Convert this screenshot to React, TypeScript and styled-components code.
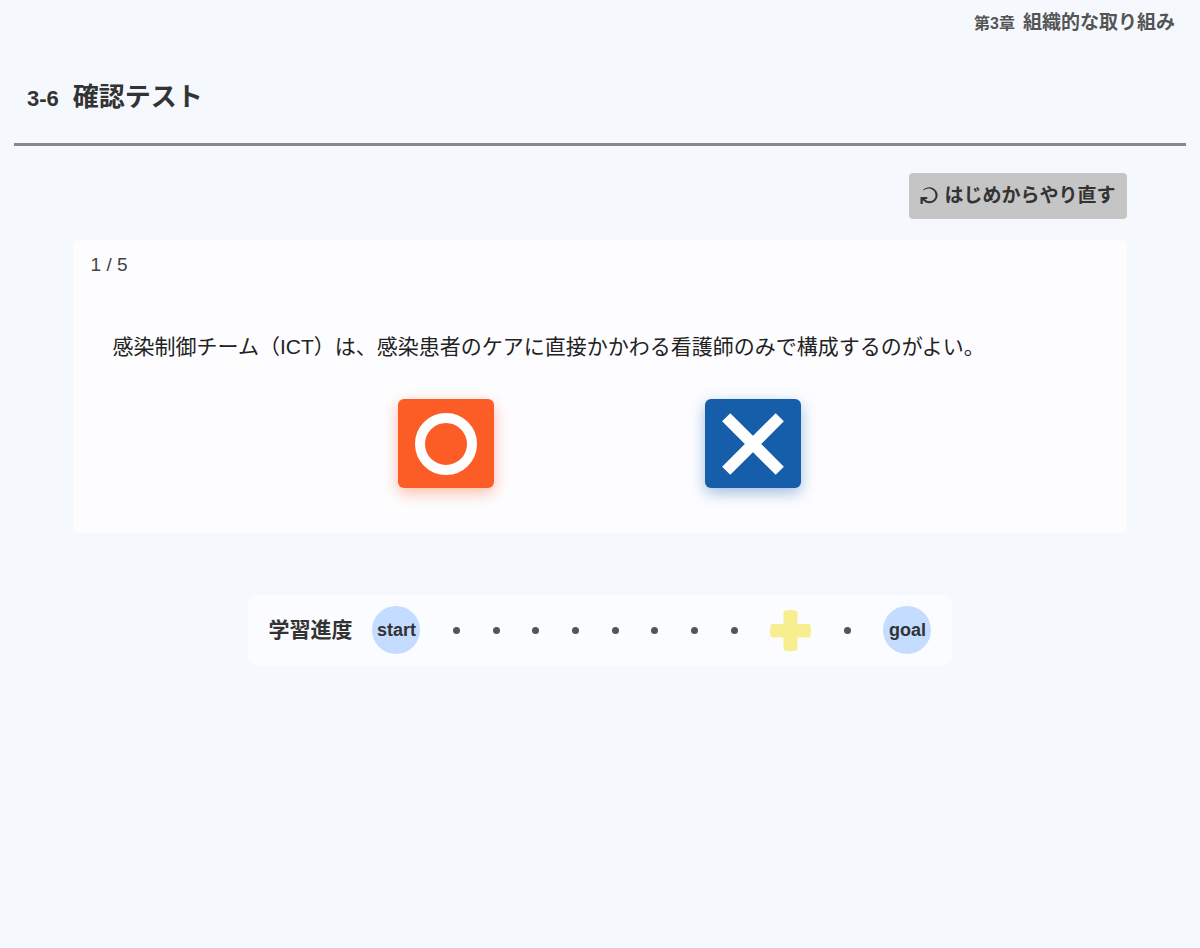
import React from "react";
import styled, { createGlobalStyle } from "styled-components";

const GlobalStyle = createGlobalStyle`
  *, *::before, *::after {
    box-sizing: border-box;
  }
  body {
    margin: 0;
    background: #f5f9fe;
    color: #333;
    font-family: "Liberation Sans", "Noto Sans CJK JP", sans-serif;
    font-size: 19px;
    line-height: 28px;
  }
`;

const Page = styled.div`
  padding: 9px 14px 40px;
`;

const Chapter = styled.p`
  margin: 0;
  padding-right: 11px;
  display: flex;
  justify-content: flex-end;
  align-items: baseline;
  gap: 8px;
  color: #555;
  font-weight: bold;
`;

const ChapterNumber = styled.span`
  font-size: 16px;
`;

const Heading = styled.h1`
  margin: 0;
  padding: 40px 13px 25px;
  display: flex;
  align-items: baseline;
  gap: 14px;
  border-bottom: 3px solid #888;
  font-size: 26px;
  line-height: 39px;
`;

const HeadingNumber = styled.span`
  font-size: 22px;
`;

const Quiz = styled.main`
  width: 90%;
  margin: 27px auto 0;
  display: flex;
  flex-direction: column;
`;

const RestartButton = styled.button`
  align-self: flex-end;
  display: flex;
  align-items: center;
  gap: 6px;
  padding: 9px 12px 9px 11px;
  border: 0;
  border-radius: 4px;
  background: #c5c5c5;
  color: #333;
  font: inherit;
  font-weight: bold;
  cursor: pointer;
`;

const Card = styled.section`
  margin-top: 21px;
  padding: 11px 18px 45px;
  border-radius: 6px;
  background: #fdfdff;
`;

const Counter = styled.p`
  margin: 0;
  color: #444;
`;

const Question = styled.p`
  margin: 52px 22px 36px;
  color: #222;
  font-size: 21px;
  line-height: 32px;
`;

const Answers = styled.div`
  display: flex;
  justify-content: center;
  gap: 211px;
`;

const AnswerButton = styled.button<{ $color: string; $shadow: string }>`
  width: 96px;
  height: 89px;
  padding: 0;
  display: grid;
  place-items: center;
  border: 0;
  border-radius: 6px;
  background: ${(p) => p.$color};
  box-shadow: 0 5px 15px ${(p) => p.$shadow};
  cursor: pointer;
`;

const Progress = styled.section`
  width: 60%;
  margin: 62px auto 0;
  padding: 11px 20px;
  display: flex;
  align-items: center;
  gap: 20px;
  border-radius: 8px;
  background: #fbfcff;
`;

const ProgressTitle = styled.h2`
  margin: 0;
  flex: none;
  font-size: 21px;
`;

const Track = styled.ol`
  flex: 1;
  margin: 0;
  padding: 0;
  display: flex;
  align-items: center;
  justify-content: space-between;
  list-style: none;
`;

const Terminal = styled.li`
  width: 48px;
  height: 48px;
  display: flex;
  align-items: center;
  justify-content: center;
  border-radius: 50%;
  background: #c4dcff;
  font-size: 18px;
  font-weight: bold;
`;

const Dot = styled.li`
  width: 7px;
  height: 7px;
  border-radius: 50%;
  background: #555;
`;

const Current = styled.li`
  display: flex;
`;

const STEPS = 10;
const CURRENT_STEP = 8;

function RestartIcon() {
  return (
    <svg width="18" height="18" viewBox="0 0 18 18" aria-hidden="true">
      <path
        d="M3 3C5.500 .3 9 -.3 12 .7C15.500 1.900 17.800 5 17.600 8.600C17.300 13.600 13 17 8 16L6.800 15.500L7.300 13.700C11.500 15.300 15.400 12.700 15.500 8.500C15.600 5.300 13.800 2.800 11 1.900C8.300 1.100 5.500 1.700 3.400 3.600Z"
        fill="currentColor"
      />
      <path d="M.5 17V10H7.300V12H4.800L8 14.800L6.800 16.200L2.800 13.300V17Z" fill="currentColor" />
    </svg>
  );
}

function PlusMark() {
  return (
    <svg width="41" height="41" viewBox="0 0 41 41" aria-hidden="true">
      <path
        d="M13.500 14V2Q13.500 0 20.500 0T27.500 2V14H39Q41 14 41 20.500T39 27.500H27.500V39Q27.500 41 20.500 41T13.500 39V27.500H2Q0 27.500 0 20.500T2 14Z"
        fill="#f7ee90"
      />
    </svg>
  );
}

export default function App() {
  return (
    <>
      <GlobalStyle />
      <Page>
        <header>
          <Chapter>
            <ChapterNumber>第3章</ChapterNumber>
            <span>組織的な取り組み</span>
          </Chapter>
          <Heading>
            <HeadingNumber>3-6</HeadingNumber>
            <span>確認テスト</span>
          </Heading>
        </header>
        <Quiz>
          <RestartButton type="button">
            <RestartIcon />
            はじめからやり直す
          </RestartButton>
          <Card>
            <Counter>1 / 5</Counter>
            <Question>
              感染制御チーム（ICT）は、感染患者のケアに直接かかわる看護師のみで構成するのがよい。
            </Question>
            <Answers>
              <AnswerButton type="button" aria-label="まる" $color="#fc5d27" $shadow="rgba(252, 93, 39, 0.4)">
                <svg width="62" height="62" viewBox="0 0 62 62" fill="none" aria-hidden="true">
                  <circle cx="31" cy="31" r="26" stroke="#fff" strokeWidth="10" />
                </svg>
              </AnswerButton>
              <AnswerButton type="button" aria-label="ばつ" $color="#165ea9" $shadow="rgba(22, 94, 169, 0.4)">
                <svg width="62" height="62" viewBox="0 0 62 62" fill="none" aria-hidden="true">
                  <path d="M4.200 4.200L57.800 57.800M57.800 4.200L4.200 57.800" stroke="#fff" strokeWidth="11.500" />
                </svg>
              </AnswerButton>
            </Answers>
          </Card>
        </Quiz>
        <Progress>
          <ProgressTitle>学習進度</ProgressTitle>
          <Track>
            <Terminal>start</Terminal>
            {Array.from({ length: STEPS }, (_, i) =>
              i === CURRENT_STEP ? (
                <Current key={i} aria-current="step">
                  <PlusMark />
                </Current>
              ) : (
                <Dot key={i} />
              )
            )}
            <Terminal>goal</Terminal>
          </Track>
        </Progress>
      </Page>
    </>
  );
}
